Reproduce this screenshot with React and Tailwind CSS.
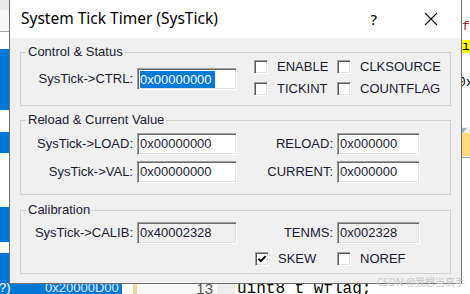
import React from "react";

const Check = ({ checked }) => (
  <span className="flex w-[14px] h-[14px] shrink-0 items-center justify-center bg-white border border-t-[#a0a0a0] border-l-[#a0a0a0] border-r-white border-b-white shadow-[inset_1px_1px_0_#5a5a5a,inset_-1px_-1px_0_#e3e3e3]">
    {checked && (
      <svg width="10" height="10" viewBox="0 0 10 10" fill="none">
        <path d="M1.5 4.8l2.3 2.4L8.6 2.2" stroke="#000" strokeWidth="1.9" />
      </svg>
    )}
  </span>
);

const Box = ({ label, checked }) => (
  <div className="flex items-center gap-[9px]">
    <Check checked={checked} />
    <span>{label}</span>
  </div>
);

const Field = ({ value, wide, readOnly, selected }) => (
  <div
    className={
      "flex h-[22px] shrink-0 items-center pl-[2px] border border-t-[#a0a0a0] border-l-[#a0a0a0] border-r-white border-b-white shadow-[inset_1px_1px_0_#696969,inset_-1px_-1px_0_#e3e3e3] " +
      (wide ? "w-[100px] " : "w-[83px] ") +
      (readOnly ? "bg-[#f0f0f0]" : "bg-white")
    }
  >
    {selected ? (
      <span className="h-[17px] leading-[17px] pr-[3px] bg-[#0078d7] text-white">{value}</span>
    ) : (
      <span>{value}</span>
    )}
  </div>
);

const Group = ({ title, className, children }) => (
  <fieldset className={"border border-[#d0d0d0] " + className}>
    <legend className="ml-[5px] px-[2px] text-[13px] leading-[8px]">{title}</legend>
    {children}
  </fieldset>
);

const Dialog = () => (
  <div className="absolute left-[9px] top-0 w-[453px] h-[284px] flex flex-col bg-[#f0f0f0] border-x border-b border-[#6e6e6e] text-[13px] text-[#1a1a33] font-['Liberation_Sans',Arial,sans-serif]">
    <div className="flex h-[38px] shrink-0 items-center bg-white pl-[11px] pr-[23px] text-black">
      <span className="flex-1 text-[15.5px] font-['Noto_Sans',sans-serif]">System Tick Timer (SysTick)</span>
      <span className="mr-[47px] text-[15px] font-['Noto_Sans',sans-serif]">?</span>
      <svg width="14" height="14" viewBox="0 0 14 14">
        <path d="M1 1L13 13M13 1L1 13" stroke="#111" strokeWidth="1.1" />
      </svg>
    </div>

    <div className="flex flex-col px-[10px] pt-[10px]">
      <Group title="Control & Status">
        <div className="flex h-[49px] items-start">
          <div className="mt-[12px] flex items-center">
            <span className="w-[112px] text-right">{"SysTick->CTRL:"}</span>
            <div className="ml-[4px]">
              <Field value="0x00000000" wide selected />
            </div>
          </div>
          <div className="ml-[17px] grid grid-cols-[83px_auto]">
            <div className="flex h-[22px] items-center"><Box label="ENABLE" /></div>
            <div className="flex h-[22px] items-center"><Box label="CLKSOURCE" /></div>
            <div className="flex h-[22px] items-center"><Box label="TICKINT" /></div>
            <div className="flex h-[22px] items-center"><Box label="COUNTFLAG" /></div>
          </div>
        </div>
      </Group>

      <Group title="Reload & Current Value" className="mt-[10px]">
        <div className="flex h-[70px] flex-col gap-[6px] pt-[9px]">
          <div className="flex items-center">
            <span className="w-[112px] text-right">{"SysTick->LOAD:"}</span>
            <div className="ml-[4px]"><Field value="0x00000000" wide /></div>
            <span className="w-[96px] text-right">RELOAD:</span>
            <div className="ml-[4px]"><Field value="0x000000" /></div>
          </div>
          <div className="flex items-center">
            <span className="w-[112px] text-right">{"SysTick->VAL:"}</span>
            <div className="ml-[4px]"><Field value="0x00000000" wide /></div>
            <span className="w-[96px] text-right">CURRENT:</span>
            <div className="ml-[4px]"><Field value="0x000000" /></div>
          </div>
        </div>
      </Group>

      <Group title="Calibration" className="mt-[11px]">
        <div className="flex h-[59px] flex-col gap-[4px] pt-[8px]">
          <div className="flex items-center">
            <span className="w-[112px] text-right">{"SysTick->CALIB:"}</span>
            <div className="ml-[4px]"><Field value="0x40002328" wide readOnly /></div>
            <span className="w-[96px] text-right">TENMS:</span>
            <div className="ml-[4px]"><Field value="0x002328" readOnly /></div>
          </div>
          <div className="flex h-[22px] items-center pl-[234px]">
            <div className="w-[82px]"><Box label="SKEW" checked /></div>
            <Box label="NOREF" />
          </div>
        </div>
      </Group>
    </div>
  </div>
);

const App = () => {
  return (
    <div className="relative flex w-[470px] h-[294px] overflow-hidden bg-white font-['Liberation_Sans',Arial,sans-serif]">
      {/* project / memory pane behind the dialog */}
      <div className="flex w-[122px] shrink-0 flex-col">
        <div className="h-[10px] bg-[#e9e9e9]" />
        <div className="h-[22px] bg-[#f6f6f6] border-b border-[#a8a8a8]" />
        <div className="h-[17px] bg-white" />
        <div className="h-[61px] bg-[#0078d7]" />
        <div className="h-[22px] bg-white" />
        <div className="h-[21px] bg-[#0078d7]" />
        <div className="h-[54px] bg-white" />
        <div className="h-[35px] bg-[#0078d7]" />
        <div className="h-[11px] bg-white" />
        <div className="flex flex-1 flex-col justify-end bg-[#0078d7]">
          <div className="-mb-[2px] flex h-[16px] items-center text-[13px] leading-[16px] text-white whitespace-nowrap">
            <span className="-ml-[1px] w-[46px]">?)</span>
            <span className="text-[#e4eefa]">0x20000D00</span>
          </div>
        </div>
      </div>

      {/* editor */}
      <div className="flex flex-1 flex-col justify-end bg-white">
        <div className="-mb-[3px] flex h-[16px] items-stretch">
          <div className="w-[11px] bg-white" />
          <div className="w-[4px] bg-[#ecd79c]" />
          <div className="flex w-[80px] items-center justify-end pr-[4px] bg-[#f8f8f8] text-[15px] text-[#555]">13</div>
          <div className="w-[18px] bg-[#ececec]" />
          <div className="pl-[2px] font-['Liberation_Mono',monospace] text-[16px] leading-[16px] text-black whitespace-nowrap">
            uint8 t wflag;
          </div>
        </div>
      </div>

      {/* right pane sliver */}
      <div className="flex w-[8px] shrink-0 flex-col overflow-hidden font-['Liberation_Mono',monospace] text-[13px] leading-[13px] whitespace-nowrap">
        <div className="h-[20px]" />
        <div className="h-[13px] text-[#a31515]">f:</div>
        <div className="h-[7px]" />
        <div className="h-[13px] bg-[#ffff00] text-black">ır</div>
        <div className="h-[25px]" />
        <div className="-ml-[4px] h-[10px] leading-[10px] text-black">0x</div>
        <div className="h-[39px]" />
        <div className="flex h-[31px] items-start bg-[#f0f0f0] border-b border-[#a0a0a0] pt-[1px]">
          <svg width="8" height="28" viewBox="0 0 8 28">
            <path d="M0 0h5l-5 6z" fill="#9fb4cc" />
            <rect x="0" y="5" width="8" height="23" fill="#ffd97a" />
          </svg>
        </div>
        <div className="flex-1" />
      </div>

      <Dialog />

      <div className="absolute right-[5px] top-[276px] text-[10px] leading-[12px] text-[#c6c6c6] whitespace-nowrap font-['Noto_Sans','Noto_Sans_CJK_SC',sans-serif]">
        CSDN @我想当高手
      </div>
    </div>
  );
};

export default App;
